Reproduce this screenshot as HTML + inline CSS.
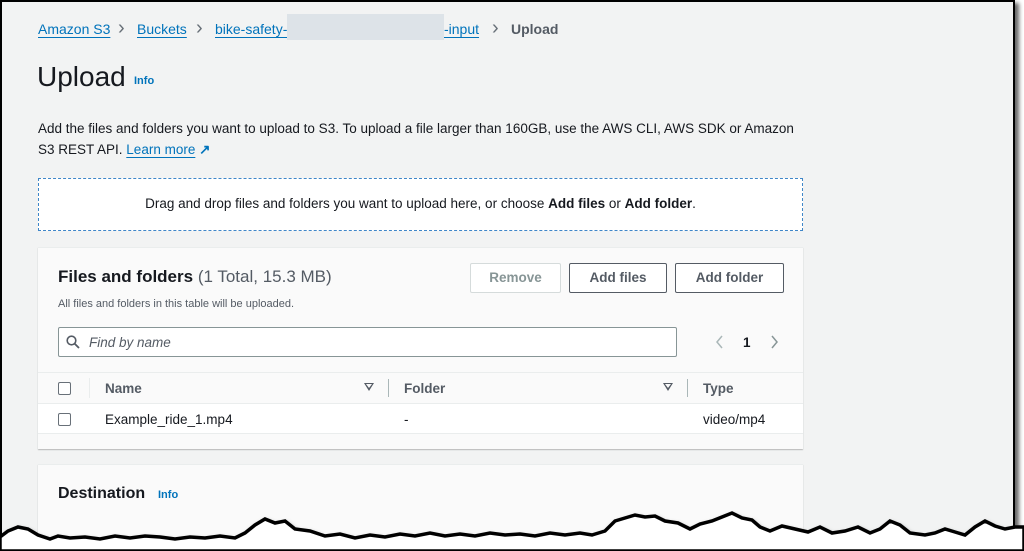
<!DOCTYPE html>
<html><head><meta charset="utf-8"><style>
*{box-sizing:border-box;margin:0;padding:0}
body{width:1024px;height:551px;background:#fff;position:relative;overflow:hidden;font-family:"Liberation Sans",sans-serif;color:#16191f}
#frame{position:absolute;left:0;top:0;width:1015px;height:545px;background:#f2f3f3;border:2px solid #000;box-shadow:4px 3px 4px rgba(0,0,0,.6)}
.a{position:absolute;white-space:nowrap}
.lnk{color:#0073bb;text-decoration:underline;text-underline-offset:3px}
.card{position:absolute;background:#fff;box-shadow:0 1px 1px rgba(0,0,0,.25);border-top:1px solid #eaeded}
.btn{position:absolute;border:1px solid #545b64;border-radius:2px;background:#fff;font-weight:bold;font-size:13.5px;color:#545b64;text-align:center;line-height:28px;top:263px;height:30px}
.cb{position:absolute;width:13px;height:13px;border:1px solid #687078;border-radius:2px;background:#fff}
.th{position:absolute;font-size:13.5px;font-weight:bold;color:#545b64;top:381px}
.sep{position:absolute;width:1px;height:18px;background:#aab7b8;top:379px}
.tri{position:absolute;top:383px;width:0;height:0;border-left:5px solid transparent;border-right:5px solid transparent;border-top:8px solid #545b64}
.tri:after{content:"";position:absolute;left:-3px;top:-7px;border-left:3px solid transparent;border-right:3px solid transparent;border-top:4px solid #fafafa}
.chev{position:absolute;font-size:20px;color:#687078;top:17px}
</style></head><body>
<div id="frame"></div>
<div class="a" style="left:38px;top:21px;font-size:14px"><span class="lnk">Amazon S3</span></div>
<div class="chev" style="left:118px">&#x203A;</div>
<div class="a" style="left:137px;top:21px;font-size:14px"><span class="lnk">Buckets</span></div>
<div class="chev" style="left:196px">&#x203A;</div>
<div class="a" style="left:215px;top:21px;font-size:14px"><span class="lnk">bike-safety-</span></div>
<div class="a" style="left:287px;top:14px;width:157px;height:26px;background:#dde3e8"></div>
<div class="a" style="left:444px;top:21px;font-size:14px"><span class="lnk">-input</span></div>
<div class="chev" style="left:492px">&#x203A;</div>
<div class="a" style="left:511px;top:21px;font-size:14px;font-weight:bold;color:#545b64">Upload</div>
<div class="a" style="left:37px;top:61px;font-size:28px">Upload</div>
<div class="a" style="left:134px;top:75px;font-size:11px;font-weight:bold;color:#0073bb">Info</div>
<div class="a" style="left:38px;top:118px;font-size:13.5px;line-height:21px">Add the files and folders you want to upload to S3. To upload a file larger than 160GB, use the AWS CLI, AWS SDK or Amazon<br>S3 REST API. <span class="lnk">Learn more</span> <span style="color:#0073bb;font-weight:bold">&#x2197;</span></div>
<div class="a" style="left:38px;top:178px;width:765px;height:53px;background:#fff;border:1px dashed #3f86c8"></div>
<div class="a" style="left:38px;top:196px;width:765px;text-align:center;font-size:13.5px">Drag and drop files and folders you want to upload here, or choose <b>Add files</b> or <b>Add folder</b>.</div>
<div class="card" style="left:38px;top:247px;width:765px;height:202px;background:#fafafa"></div>
<div class="a" style="left:38px;top:403px;width:765px;height:31px;background:#fff;border-top:1px solid #eaeded;border-bottom:1px solid #eaeded"></div>
<div class="a" style="left:38px;top:372px;width:765px;height:1px;background:#eaeded"></div>
<div class="a" style="left:58px;top:267px;font-size:17px;font-weight:bold">Files and folders <span style="font-weight:normal;color:#545b64">(1 Total, 15.3 MB)</span></div>
<div class="a" style="left:58px;top:298px;font-size:11px;color:#545b64">All files and folders in this table will be uploaded.</div>
<div class="btn" style="left:470px;width:91px;border-color:#d5dbdb;color:#879596">Remove</div>
<div class="btn" style="left:569px;width:98px">Add files</div>
<div class="btn" style="left:675px;width:109px">Add folder</div>
<div class="a" style="left:58px;top:327px;width:619px;height:30px;background:#fff;border:1px solid #879596;border-radius:2px"></div>
<svg class="a" style="left:66px;top:335px" width="14" height="14" viewBox="0 0 14 14"><circle cx="5.5" cy="5.5" r="4.3" fill="none" stroke="#545b64" stroke-width="1.6"/><path d="M8.6 8.6L13 13" stroke="#545b64" stroke-width="1.8"/></svg>
<div class="a" style="left:89px;top:335px;font-size:13.5px;font-style:italic;color:#545b64">Find by name</div>
<svg class="a" style="left:715px;top:335px" width="10" height="14"><path d="M7 1L2 7l5 6" fill="none" stroke="#aab7b8" stroke-width="1.5"/></svg>
<div class="a" style="left:743px;top:335px;font-size:13.5px;font-weight:bold">1</div>
<svg class="a" style="left:769px;top:335px" width="10" height="14"><path d="M3 1l5 6-5 6" fill="none" stroke="#879596" stroke-width="1.5"/></svg>
<div class="cb" style="left:58px;top:382px"></div>
<div class="a" style="left:89px;top:378px;width:1px;height:20px;background:#eaeded"></div>
<div class="th" style="left:105px">Name</div>
<div class="tri" style="left:364px"></div>
<div class="sep" style="left:388px"></div>
<div class="th" style="left:404px">Folder</div>
<div class="tri" style="left:663px"></div>
<div class="sep" style="left:687px"></div>
<div class="th" style="left:703px">Type</div>
<div class="cb" style="left:58px;top:413px"></div>
<div class="a" style="left:105px;top:412px;font-size:13.5px">Example_ride_1.mp4</div>
<div class="a" style="left:404px;top:412px;font-size:13.5px">-</div>
<div class="a" style="left:703px;top:412px;font-size:13.5px">video/mp4</div>
<div class="card" style="left:38px;top:464px;width:765px;height:80px;background:#fafafa"></div>
<div class="a" style="left:58px;top:485px;font-size:16px;font-weight:bold">Destination</div>
<div class="a" style="left:158px;top:489px;font-size:11px;font-weight:bold;color:#0073bb">Info</div>
<svg class="a" style="left:0;top:505px" width="1024" height="46" viewBox="0 0 1024 46">
<path d="M0 32 L8 26 L18 22 L28 24 L38 30 L50 34 L58 31 L70 33 L85 32 L100 34 L115 31 L130 33 L145 31 L160 32 L175 34 L190 32 L205 33 L220 31 L235 33 L245 28 L255 20 L265 14 L275 18 L285 16 L295 24 L310 26 L325 31 L340 29 L355 33 L370 30 L385 32 L400 29 L415 31 L430 28 L445 31 L460 29 L475 31 L490 28 L505 30 L520 29 L535 31 L550 28 L565 30 L580 28 L592 30 L605 26 L615 16 L625 13 L635 10 L645 12 L655 11 L665 16 L678 18 L690 24 L700 19 L712 16 L722 12 L732 8 L742 13 L752 15 L760 22 L770 26 L782 21 L795 24 L808 27 L820 22 L832 28 L845 26 L858 22 L870 28 L880 24 L890 16 L900 20 L910 28 L925 30 L935 28 L945 24 L955 27 L965 30 L975 22 L985 16 L995 21 L1005 24 L1015 22 L1024 22 L1024 46 L0 46 Z" fill="#fff" stroke="#000" stroke-width="3.5" style="filter:drop-shadow(1px 3px 2px rgba(0,0,0,.5))"/>
</svg>
</body></html>
